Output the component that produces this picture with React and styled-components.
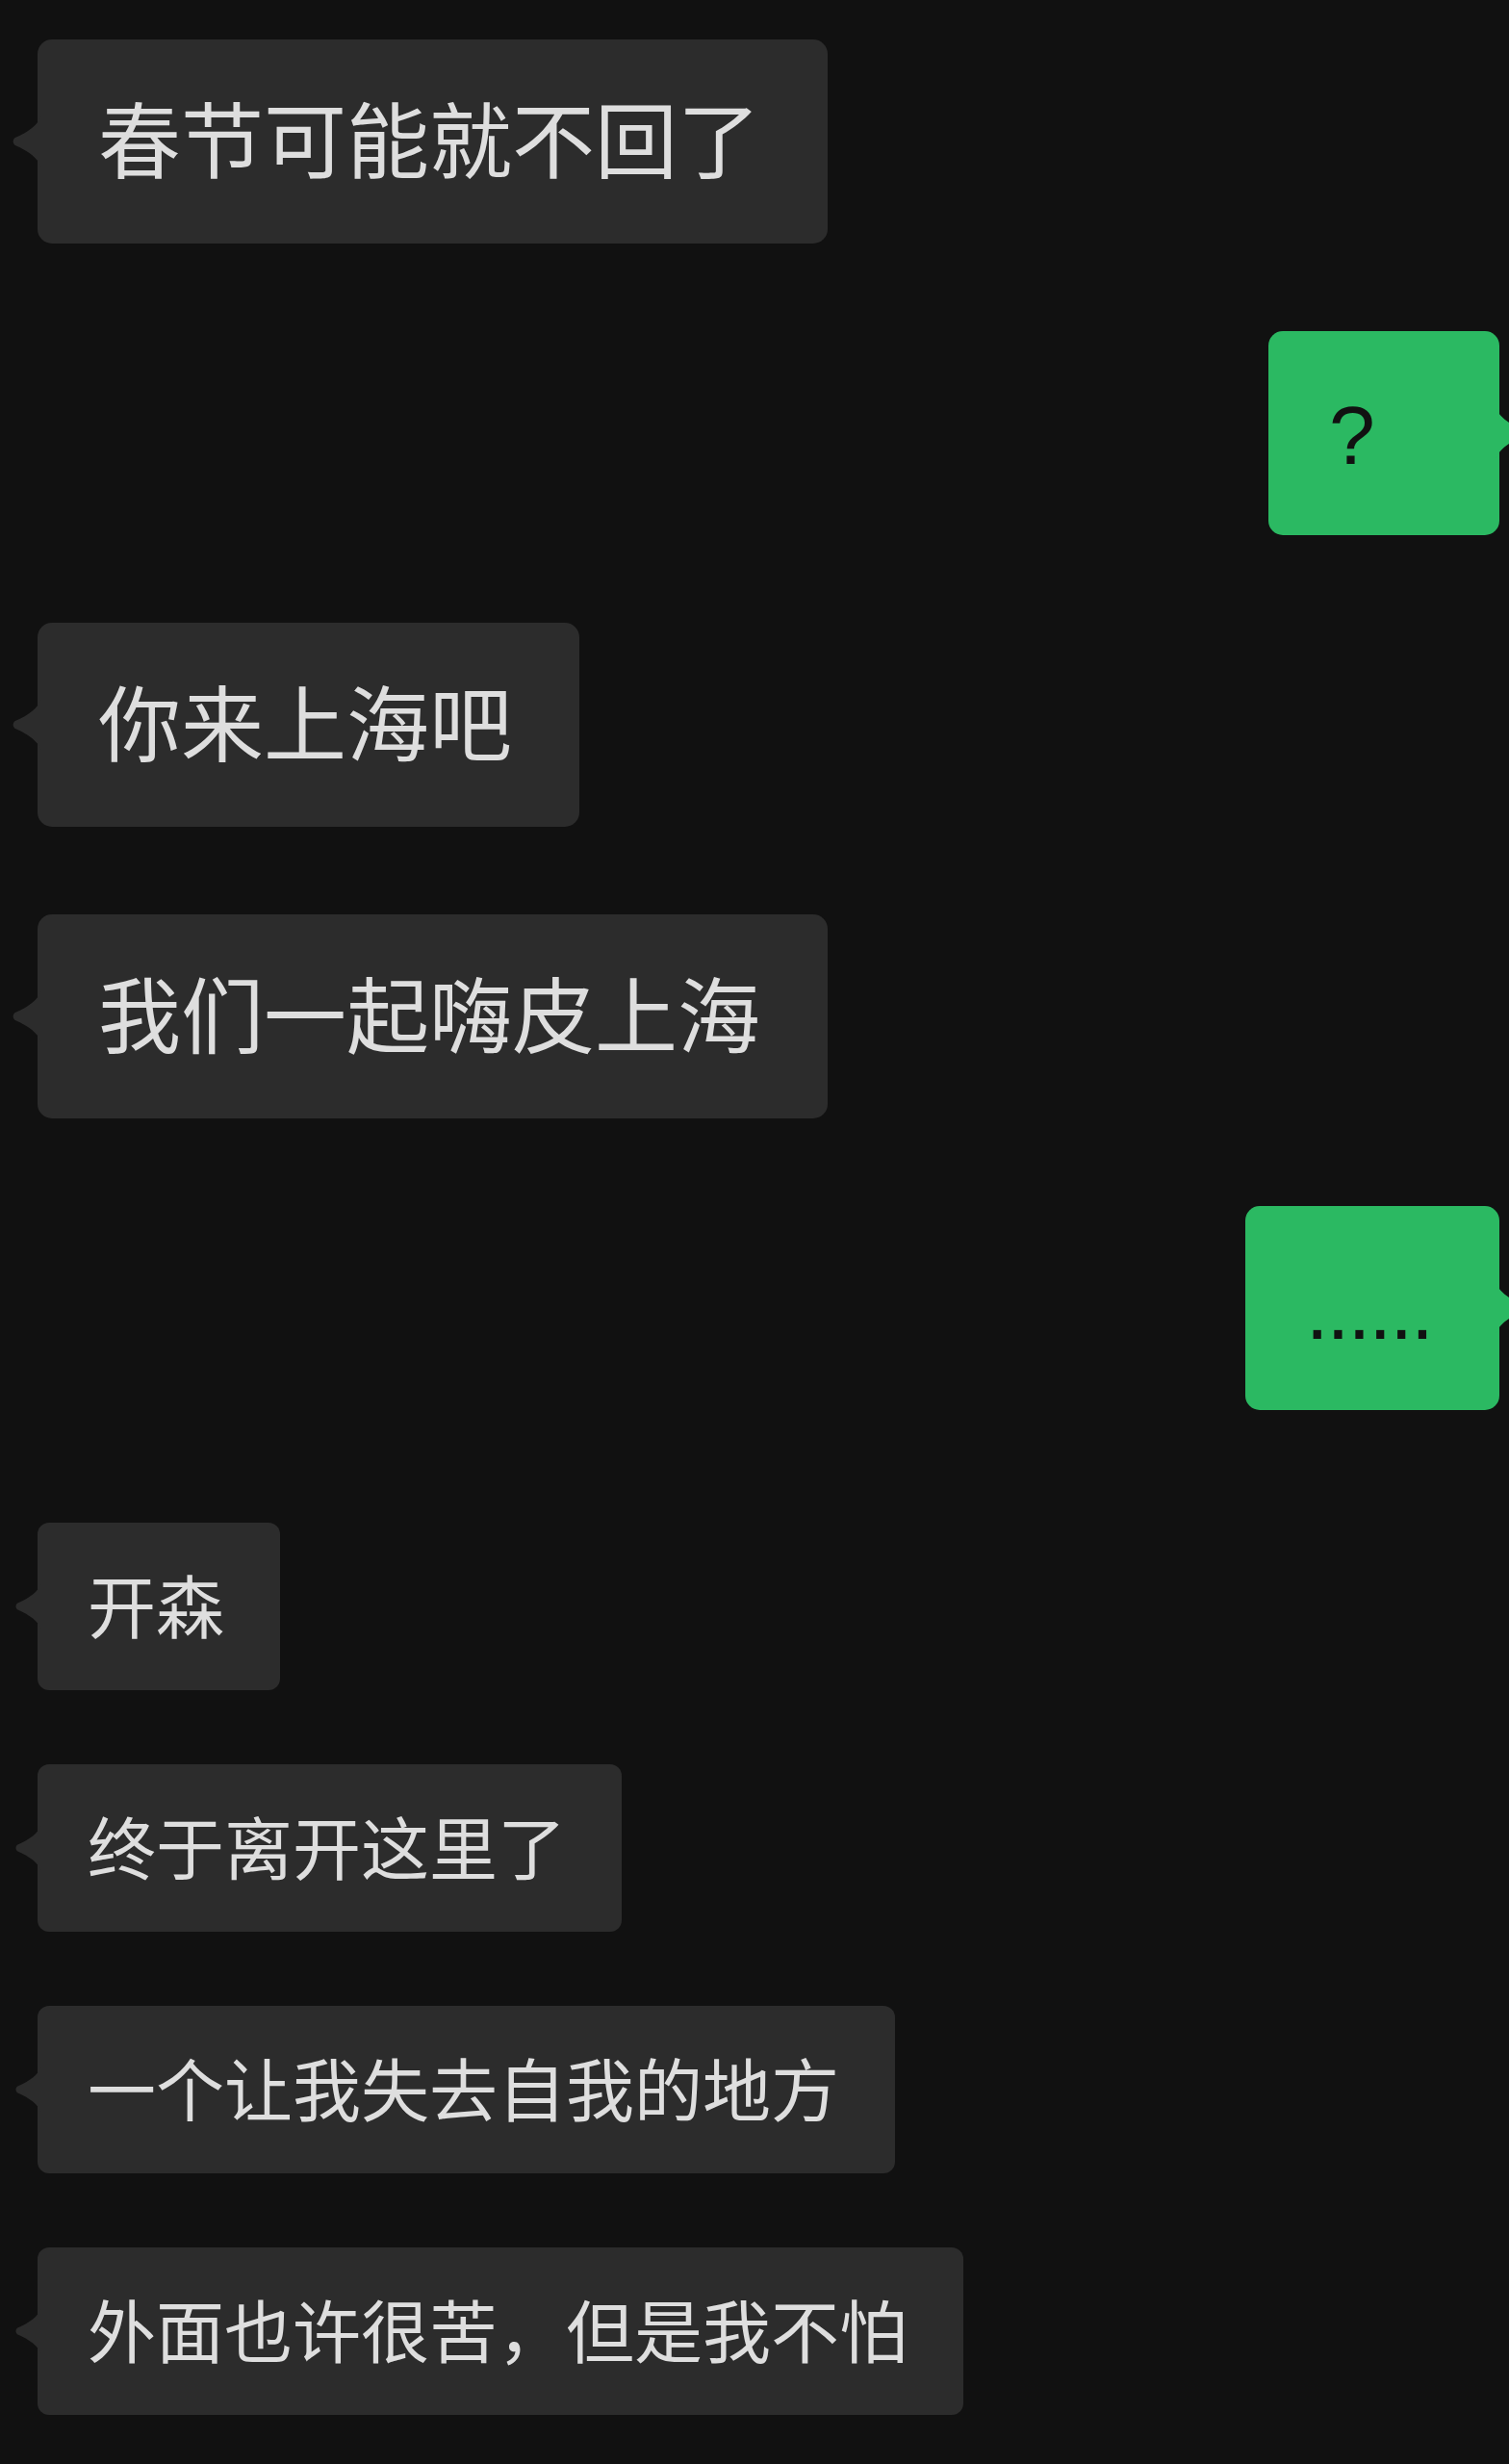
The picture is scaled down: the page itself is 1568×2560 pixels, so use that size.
import styled, { createGlobalStyle } from "styled-components";

const GlobalStyle = createGlobalStyle`
    html, body {
        margin: 0;
        padding: 0;
        background: #111111;
    }
`;

const sizes = {
    large: { font: 86, height: 212, padLeft: 63, padRight: 70, radius: 15, tailW: 27, tailH: 52 },
    small: { font: 71, height: 174, padLeft: 52, padRight: 58, radius: 12, tailW: 24, tailH: 46 },
};

const messages = [
    { section: "large", items: [
        { from: "them", text: "春节可能就不回了" },
        { from: "me", text: "?" },
        { from: "them", text: "你来上海吧" },
        { from: "them", text: "我们一起嗨皮上海" },
        { from: "me", text: "......", dots: true },
    ]},
    { section: "small", items: [
        { from: "them", text: "开森" },
        { from: "them", text: "终于离开这里了" },
        { from: "them", text: "一个让我失去自我的地方" },
        { from: "them", text: "外面也许很苦，但是我不怕" },
    ]},
];

function Tail({ side, color, w, h }) {
    // curved little arrow that sticks out of the bubble side
    const d = `M${w + 4} 0 C${w} ${h * 0.16} ${w * 0.7} ${h * 0.3} ${w * 0.12} ${h * 0.43} Q0 ${h / 2} ${w * 0.12} ${h * 0.57} C${w * 0.7} ${h * 0.7} ${w} ${h * 0.84} ${w + 4} ${h} Z`;
    return (
        <TailSvg $side={side} $w={w} $h={h} width={w + 4} height={h} viewBox={`0 0 ${w + 4} ${h}`}>
            <path d={d} fill={color} />
        </TailSvg>
    );
}

function Message({ from, text, size, dots }) {
    const s = sizes[size];
    const mine = from === "me";
    return (
        <Row $mine={mine}>
            <Bubble $mine={mine} $s={s}>
                <Tail side={mine ? "right" : "left"} color={mine ? "#2bb962" : "#2c2c2c"} w={s.tailW} h={s.tailH} />
                <Text $mine={mine} $dots={dots}>{text}</Text>
            </Bubble>
        </Row>
    );
}

export default function App() {
    return (
        <>
            <GlobalStyle />
            <Chat>
                {messages.map((group) => (
                    <Section key={group.section} $size={group.section}>
                        {group.items.map((m, i) => (
                            <Message key={i} {...m} size={group.section} />
                        ))}
                    </Section>
                ))}
            </Chat>
        </>
    );
}

const Chat = styled.div`
    display: flex;
    flex-direction: column;
    gap: 117px;
    width: 1568px;
    box-sizing: border-box;
    padding: 41px 10px 51px 39px;
    background: #111111;
    min-height: 2560px;
`;

const Section = styled.div`
    display: flex;
    flex-direction: column;
    gap: ${(p) => (p.$size === "large" ? "91px" : "77px")};
`;

const Row = styled.div`
    display: flex;
    justify-content: ${(p) => (p.$mine ? "flex-end" : "flex-start")};
`;

const Bubble = styled.div`
    position: relative;
    display: flex;
    align-items: center;
    box-sizing: border-box;
    height: ${(p) => p.$s.height}px;
    min-width: ${(p) => (p.$s.font > 80 ? 240 : 0)}px;
    padding: 0 ${(p) => p.$s.padRight}px 0 ${(p) => p.$s.padLeft}px;
    border-radius: ${(p) => p.$s.radius}px;
    background: ${(p) => (p.$mine ? "#2bb962" : "#2c2c2c")};
    font-size: ${(p) => p.$s.font}px;
`;

const TailSvg = styled.svg`
    position: absolute;
    top: 50%;
    margin-top: ${(p) => -p.$h / 2}px;
    ${(p) => (p.$side === "left" ? `left: ${-p.$w}px;` : `right: ${-p.$w}px; transform: scaleX(-1);`)}
    display: block;
`;

const Text = styled.span`
    font-family: "Liberation Sans", "Noto Sans CJK SC", sans-serif;
    line-height: 1;
    white-space: nowrap;
    color: ${(p) => (p.$mine ? "#111111" : "#dedede")};
    letter-spacing: ${(p) => (p.$dots ? "-2px" : "0")};
    margin-top: 4px;
`;
